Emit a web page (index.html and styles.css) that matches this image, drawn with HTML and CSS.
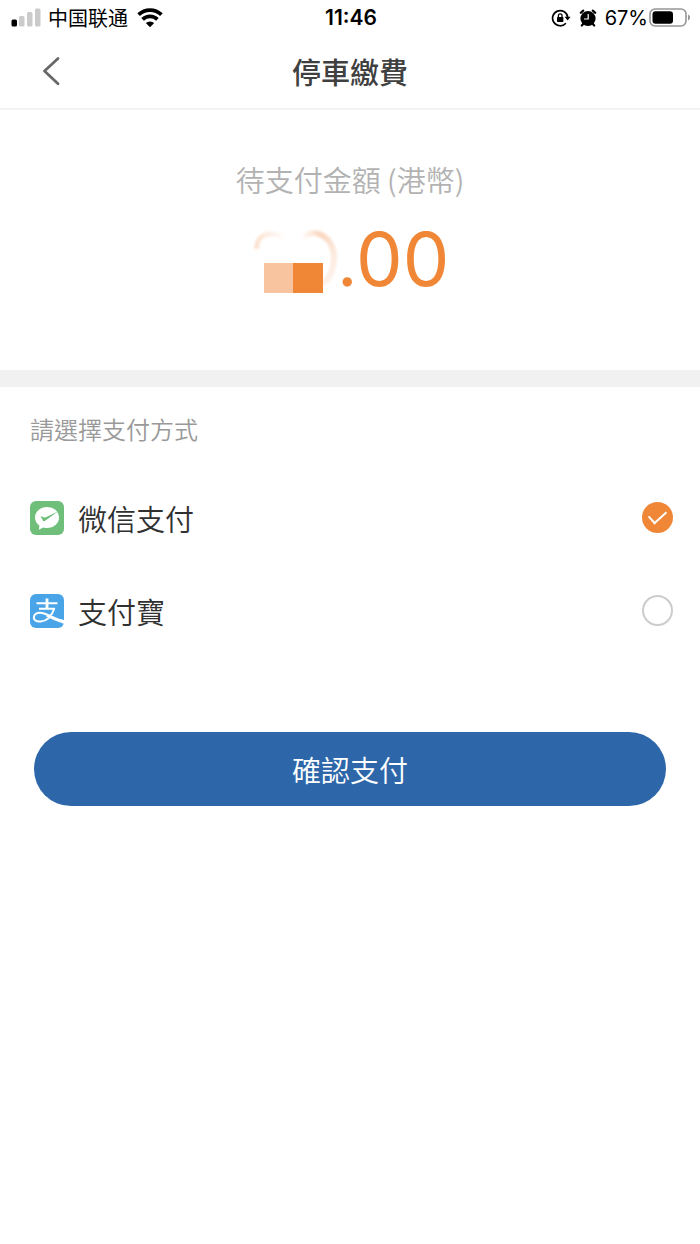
FILE: index.html
```html
<!DOCTYPE html>
<html lang="zh-Hant">
<head>
<meta charset="utf-8">
<meta name="viewport" content="width=device-width, initial-scale=1">
<title>停車繳費</title>
<link rel="stylesheet" href="styles.css">
</head>
<body>
<div class="status">
  <div class="status-left">
    <svg class="signal" width="30" height="20" viewBox="0 0 30 20" aria-hidden="true">
      <rect x="0.5" y="11.5" width="5.5" height="7" rx="1.5" fill="#000"/>
      <g fill="#cbcbcb"><rect x="8" y="8" width="5.5" height="10.5" rx="1.5"/><rect x="16" y="4" width="5.5" height="14.5" rx="1.5"/><rect x="24" y="0.5" width="5.5" height="18" rx="1.5"/></g>
    </svg>
    <span class="carrier" lang="zh-Hans">中国联通</span>
    <svg class="wifi" width="26" height="20" viewBox="0 0 26 20" aria-hidden="true">
      <g fill="none" stroke="#000" stroke-width="3.8"><path d="M1.600 6.700a16.400 16.400 0 0 1 22.800 0"/><path d="M5.600 11.400a10.600 10.600 0 0 1 14.800 0"/></g>
      <path d="M8.800 15a6.400 6.400 0 0 1 8.400 0L13 19.200z"/>
    </svg>
  </div>
  <time class="clock">11:46</time>
  <div class="status-right">
    <svg class="lock" width="20" height="20" viewBox="0 0 20 20" aria-hidden="true">
      <path d="M14.900 15.200A7.600 7.600 0 1 1 16.700 9" fill="none" stroke="#000" stroke-width="1.700"/>
      <path d="M13.600 8.700h6L16.600 12.500z"/>
      <rect x="6" y="9" width="6.400" height="5" rx="0.700"/>
      <path d="M7.400 9.500V7.600a1.800 1.800 0 0 1 3.600 0v1.900" fill="none" stroke="#000" stroke-width="1.300"/>
    </svg>
    <svg class="alarm" width="18" height="20" viewBox="0 0 18 20" aria-hidden="true">
      <circle cx="9" cy="10.500" r="7.600"/>
      <g fill="none" stroke="#000" stroke-linecap="round" stroke-width="2.200"><path d="M1.800 4.800 4.200 2.600M16.200 4.800l-2.400-2.200M4.300 15.800l-1.500 1.700M13.700 15.800l1.500 1.700"/></g>
      <path d="M9.200 6v5H5" fill="none" stroke="#fff" stroke-width="1.200"/>
    </svg>
    <span class="percent">67%</span>
    <svg class="battery" width="42" height="20" viewBox="0 0 42 20" aria-hidden="true">
      <rect x="1" y="1" width="36" height="17" rx="5" fill="none" stroke="#969696" stroke-width="1.600"/>
      <rect x="3.500" y="3.200" width="20.500" height="12.600" rx="3"/>
      <path d="M39 6.500c2.700 1 2.700 5 0 6z" fill="#969696"/>
    </svg>
  </div>
</div>
<header class="header">
  <button class="back" type="button" aria-label="返回">
    <svg width="20" height="30" viewBox="0 0 20 30" aria-hidden="true"><path d="M18 2.500 4.500 15 18 27.800" fill="none" stroke="#686868" stroke-width="2.800" stroke-linecap="round" stroke-linejoin="round"/></svg>
  </button>
  <h1 class="title">停車繳費</h1>
</header>
<main>
  <section class="amount">
    <p class="amount-label">待支付金額 (港幣)</p>
    <p class="amount-value">
      <svg class="masked" width="88" height="66" viewBox="0 0 88 66" aria-hidden="true">
        <defs>
          <linearGradient id="fadeLeft" x1="0" y1="0" x2="1" y2="0"><stop offset="0" stop-color="#fce3d2"/><stop offset="1" stop-color="#fff"/></linearGradient>
          <linearGradient id="fadeRight" x1="0" y1="0" x2="1" y2="0"><stop offset="0" stop-color="#fff"/><stop offset=".6" stop-color="#f9d2b7"/><stop offset="1" stop-color="#fbe0ce"/></linearGradient>
          <linearGradient id="fadeDown" x1="0" y1="0" x2="0" y2="1"><stop offset="0" stop-color="#fff" stop-opacity="0"/><stop offset="1" stop-color="#fff" stop-opacity=".8"/></linearGradient>
          <filter id="soften" x="-20%" y="-20%" width="140%" height="140%"><feGaussianBlur stdDeviation="0.8"/></filter>
        </defs>
        <g fill="none" filter="url(#soften)">
          <path d="M6 22C5 13 11 7 20 7c6 0 11 1 15 5" stroke="url(#fadeLeft)" stroke-width="5"/>
          <path d="M50 12c5-5 12-7 18-5 11 4 16 15 15 26-1 12-5 20-12 24" stroke="url(#fadeRight)" stroke-width="6"/>
        </g>
        <path d="M50 0h38v66H50z" fill="url(#fadeDown)"/>
        <path d="M13 36h30v30H13z" fill="#f7c49f"/>
        <path d="M42 36h30v30H42z" fill="#f08737"/>
      </svg>
      <span class="digits"><span class="point">.</span>00</span>
    </p>
  </section>
  <form class="payment">
    <fieldset class="methods">
      <legend class="legend">請選擇支付方式</legend>
      <label class="method">
        <svg class="logo" width="34" height="34" viewBox="0 0 34 34" aria-hidden="true">
          <rect width="34" height="34" rx="6" fill="#6fbf7b"/>
          <path d="M17 6C10.300 6 5 10.700 5 16.600c0 3.300 1.700 6.100 4.400 8L8.800 28.800l4.500-2.300c1.200.4 2.400.5 3.700.5 6.700 0 12-4.500 12-10.300C29 10.500 23.700 6 17 6z" fill="#fff"/>
          <path d="M10.600 15.300c1.300-.7 2.800 1.500 4.600 1.100L28 10.600c-4.500 3.200-8.800 6.200-13.200 9.300-1.100.8-1.600.2-2-.6z" fill="#6fbf7b"/>
        </svg>
        <span class="method-name">微信支付</span>
        <input class="radio" type="radio" name="method" value="wechat" checked>
      </label>
      <label class="method">
        <svg class="logo" width="34" height="34" viewBox="0 0 34 34" aria-hidden="true">
          <rect width="34" height="34" rx="6" fill="#4aa5e8"/>
          <g fill="none" stroke="#fff"><path d="M6.500 9.200h21M9 14.800h16" stroke-width="2"/><path d="M17 4.500v10" stroke-width="2.800"/>
          <path d="M24.300 14.500c-2 6-6.300 12.500-13.800 13C5.500 27.800 3.300 25.500 4 22.600c.8-3 4.200-4.200 8-3.600C18 20 24 24.300 34 27.600" stroke-width="2"/></g>
          <path d="M17 20.600c5 2.600 10 4.300 17 5.400v3.800c-7-2-13-4.800-18-7.500z" fill="#fff"/>
        </svg>
        <span class="method-name">支付寶</span>
        <input class="radio" type="radio" name="method" value="alipay">
      </label>
    </fieldset>
    <button class="confirm" type="submit">確認支付</button>
  </form>
</main>
</body>
</html>
```
FILE: styles.css
```css
* {
  box-sizing: border-box;
}

body {
  margin: 0;
  background: #fff;
  color: #303030;
  font-family: "Noto Sans CJK TC", sans-serif;
  font-weight: 350;
}

svg {
  display: block;
  flex: none;
}

.status {
  display: grid;
  grid-template-columns: 1fr auto 1fr;
  align-items: center;
  height: 36px;
  padding: 0 9px 0 11px;
  color: #000;
  font-size: 20px;
  line-height: 24px;
}

.status-left,
.status-right {
  display: flex;
  align-items: center;
}

.status-left {
  gap: 7px;
}

.status-right {
  justify-content: flex-end;
  gap: 8px;
}

.carrier {
  font-family: "Noto Sans CJK SC", sans-serif;
  font-weight: 400;
}

.wifi {
  margin-left: 2px;
}

.clock {
  font-family: Inter, sans-serif;
  font-size: 21px;
  font-weight: 600;
}

.percent {
  font-family: Inter, sans-serif;
  font-weight: 400;
}

.battery {
  margin-left: -7px;
}

.header {
  display: grid;
  grid-template-columns: 1fr auto 1fr;
  align-items: center;
  height: 74px;
  padding: 0 40px 3px;
  border-bottom: 2px solid #f3f3f3;
}

.back {
  justify-self: start;
  padding: 0;
  border: 0;
  background: none;
}

.title {
  margin: 0;
  color: #404040;
  font-size: 29px;
  font-weight: 500;
  line-height: 40px;
}

.amount {
  padding: 49px 30px 70px;
  border-bottom: 17px solid #f1f1f1;
  text-align: center;
}

.amount-label {
  margin: 0;
  color: #b2b2b2;
  font-size: 29px;
  line-height: 40px;
}

.amount-value {
  display: flex;
  justify-content: center;
  align-items: flex-start;
  margin: 18px 0 0;
  color: #f08737;
}

.masked {
  margin-top: 10px;
}

.digits {
  font-family: Inter, sans-serif;
  font-size: 74px;
  font-weight: 400;
  line-height: 82px;
}

.point {
  font-family: Lato, sans-serif;
}

.payment {
  padding: 24px 27px 40px 30px;
}

.methods {
  margin: 0;
  padding: 0;
  border: 0;
}

.legend {
  padding: 0;
  margin-bottom: 24px;
  color: #999;
  font-size: 24px;
  line-height: 36px;
}

.method {
  display: flex;
  align-items: center;
  gap: 14px;
  height: 93px;
}

.method-name {
  flex: 1;
  font-size: 29px;
  line-height: 40px;
}

.radio {
  appearance: none;
  flex: none;
  width: 31px;
  height: 31px;
  margin: 0;
  border: 2px solid #ccc;
  border-radius: 50%;
}

.radio:checked {
  display: grid;
  place-items: center;
  border: 0;
  background: #f08737;
}

.radio:checked::before {
  content: "";
  width: 15px;
  height: 8px;
  margin-bottom: 6px;
  border: solid #fff;
  border-width: 0 0 2px 2px;
  transform: rotate(-42deg);
}

.confirm {
  display: block;
  width: calc(100% - 11px);
  height: 74px;
  margin: 75px 7px 0 4px;
  border: 0;
  border-radius: 37px;
  background: #2d67aa;
  color: #fff;
  font: inherit;
  font-size: 29px;
}
```
